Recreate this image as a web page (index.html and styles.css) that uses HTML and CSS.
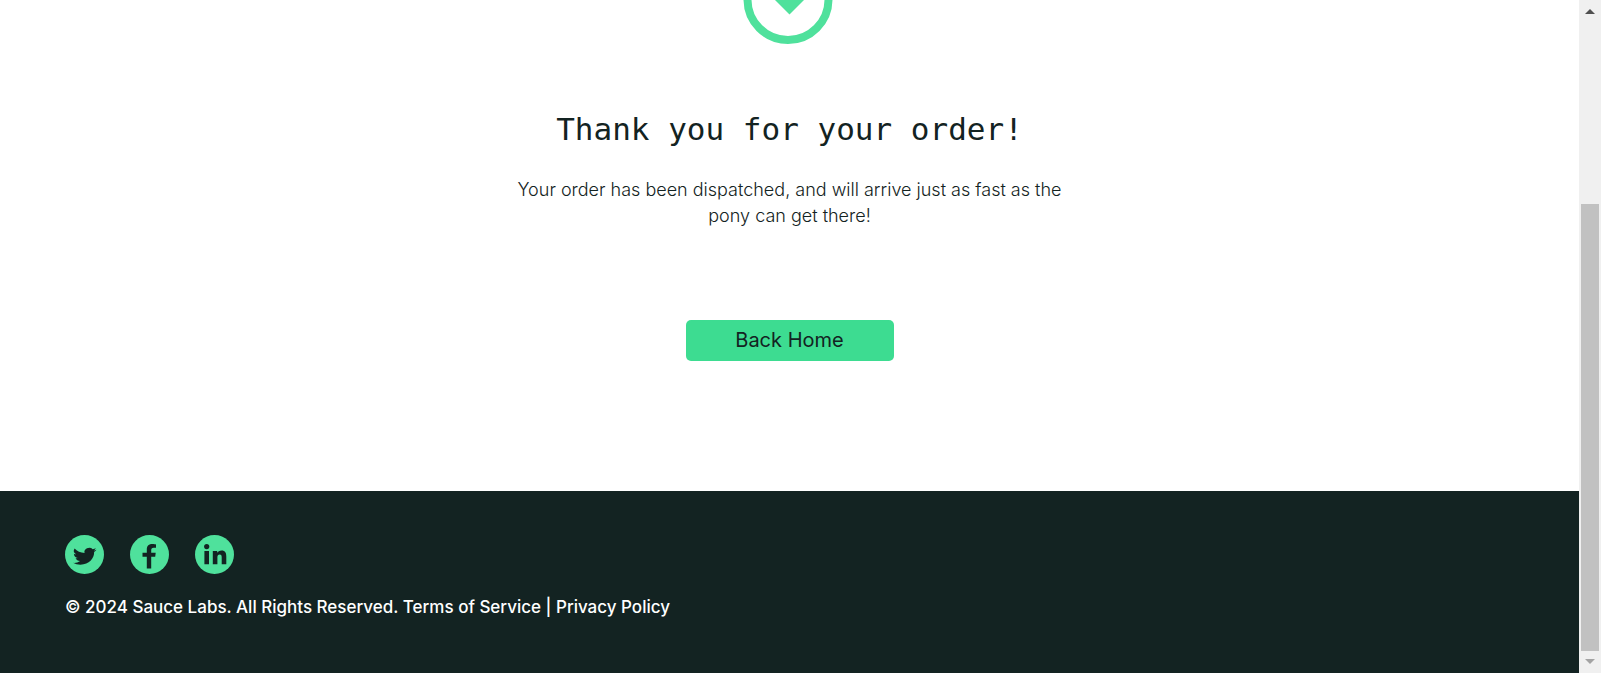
FILE: index.html
```html
<!DOCTYPE html>
<html lang="en">
<head>
<meta charset="utf-8">
<title>Checkout: Complete!</title>
<link rel="stylesheet" href="styles.css">
</head>
<body>
<div class="viewport">
  <div class="page">
    <main class="complete">
      <svg class="check" viewBox="0 0 94 45" aria-hidden="true">
        <circle cx="45" cy="-0.5" r="40.5" fill="none" stroke="#4fe19c" stroke-width="8"/>
        <path d="M32 0h29L46.5 14.6z" fill="#4fe19c"/>
      </svg>
      <h2 class="title">Thank you for your order!</h2>
      <p class="message">Your order has been dispatched, and will arrive just as fast as the<br>pony can get there!</p>
      <button class="home" type="button">Back Home</button>
    </main>
    <footer class="footer">
      <ul class="social">
        <li><a href="#" aria-label="Twitter"><svg viewBox="0 0 39 39"><circle cx="19.5" cy="19.5" r="19.5"/><path class="glyph" transform="translate(8 12.6) scale(.98 .87)" d="M23.95 2.57a10 10 0 0 1-2.82.77 4.96 4.96 0 0 0 2.16-2.72c-.95.55-2 .95-3.13 1.18a4.92 4.92 0 0 0-8.38 4.48C7.69 6.1 4.07 4.13 1.64 1.16a4.9 4.9 0 0 0 1.52 6.57 4.9 4.9 0 0 1-2.23-.61v.06a4.92 4.92 0 0 0 3.95 4.83 5 5 0 0 1-2.21.08 4.94 4.94 0 0 0 4.6 3.42A9.87 9.87 0 0 1 0 17.54a13.99 13.99 0 0 0 7.55 2.21c9.05 0 14-7.5 14-13.98 0-.21 0-.42-.02-.63a9.94 9.94 0 0 0 2.46-2.55z"/></svg></a></li>
        <li><a href="#" aria-label="Facebook"><svg viewBox="0 0 39 39"><circle cx="19.5" cy="19.5" r="19.5"/><path class="glyph" d="M16.8 33.5V21.7H12.5V17.8H16.8V14.5C16.8 10.5 19 8.9 22.5 8.9C24 8.9 25.3 9.1 26 9.4V12.8H23.6C21.8 12.8 21.2 13.8 21.2 15.5V17.8H25.7L25.2 21.7H21.2V33.5Z"/></svg></a></li>
        <li><a href="#" aria-label="LinkedIn"><svg viewBox="0 0 39 39"><circle cx="19.5" cy="19.5" r="19.5"/><circle class="glyph" cx="11.7" cy="11.6" r="2.6"/><path class="glyph" d="M9.4 15.9H14V29.2H9.4ZM17.8 15.9H22.2V17.8C23 16.5 24.4 15.5 26.6 15.5C30.3 15.5 31.3 18 31.3 21.4V29.2H26.7V22.4C26.7 20.7 26.4 19.4 24.7 19.4C23 19.4 22.4 20.7 22.4 22.3V29.2H17.8Z"/></svg></a></li>
      </ul>
      <p class="copy">© 2024 Sauce Labs. All Rights Reserved. Terms of Service | Privacy Policy</p>
    </footer>
  </div>
  <div class="scrollbar" aria-hidden="true">
    <svg class="arrow" viewBox="0 0 22 22"><path d="M6 14L11 9L16 14Z" fill="#505050"/></svg>
    <div class="track"><div class="thumb"></div></div>
    <svg class="arrow" viewBox="0 0 22 22"><path d="M6 8L11 13L16 8Z" fill="#a3a3a3"/></svg>
  </div>
</div>
</body>
</html>
```
FILE: styles.css
```css
* { box-sizing: border-box; }

body {
  margin: 0;
  background: #fff;
  color: #132322;
  font-family: Inter, "Liberation Sans", sans-serif;
}

.viewport { display: flex; min-height: 100vh; }

.page { flex: 1; display: flex; flex-direction: column; }

.complete {
  display: flex;
  flex-direction: column;
  align-items: center;
  padding-bottom: 130px;
}

.check { display: block; width: 94px; height: 45px; }

.title {
  margin: 64px 0 0;
  font: 400 31px/40px "DejaVu Sans Mono", monospace;
}

.message {
  margin: 28px 0 0;
  font-size: 18px;
  line-height: 26px;
  font-weight: 300;
  text-align: center;
}

.home {
  width: 208px;
  height: 41px;
  margin-top: 91px;
  padding: 0 0 2px;
  border: 0;
  border-radius: 5px;
  background: #3ddc91;
  color: #132322;
  font: 400 20px/38px Inter, sans-serif;
}

.footer {
  flex: 1;
  padding: 44px 65px;
  background: #132322;
  color: #fff;
}

.social {
  display: flex;
  gap: 26px;
  margin: 0;
  padding: 0;
  list-style: none;
}

.social a, .social svg { display: block; width: 39px; height: 39px; }
.social svg { fill: #4fe19c; }
.social .glyph { fill: #132322; }

.copy {
  margin: 20px 0 0;
  font-size: 17px;
  font-weight: 500;
  line-height: 26px;
}

.scrollbar {
  display: flex;
  flex-direction: column;
  width: 22px;
  background: #f0f0f0;
}

.arrow { display: block; width: 22px; height: 22px; }

.track {
  flex: 1;
  display: flex;
  flex-direction: column;
  padding: 182px 2px 0;
}

.thumb { flex: 1; background: #c1c1c1; }
```
